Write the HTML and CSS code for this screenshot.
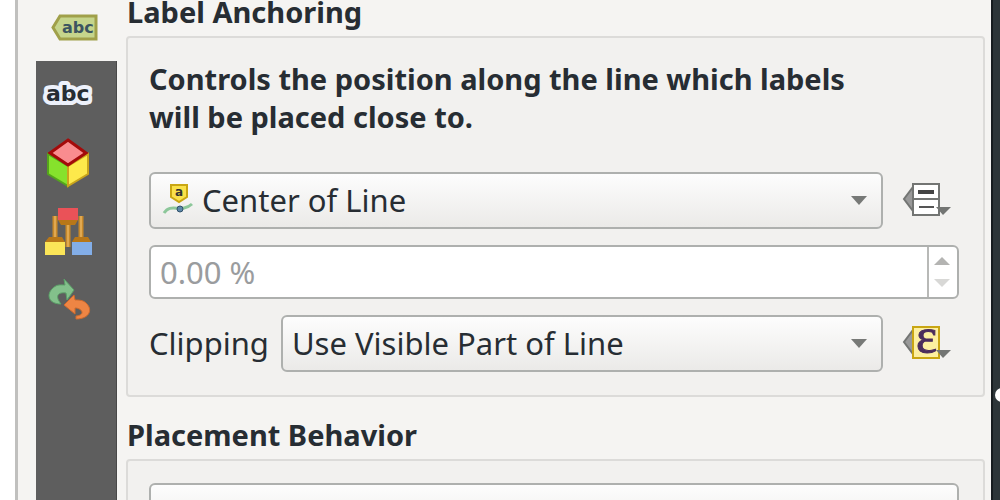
FILE: index.html
```html
<!DOCTYPE html>
<html lang="en">
    <head>
        <meta charset="utf-8">
        <title>Label Settings</title>
        <link rel="stylesheet" href="styles.css">
    </head>
    <body>
        <div class="window">

            <!-- Tabs -->
            <nav class="tabs">
                <button class="tab active" type="button" aria-label="Placement">
                    <svg width="48" height="30" viewBox="0 0 48 30">
                        <path d="M9 4H45V27H9L2 15.500Z" fill="#c5d58c" stroke="#a0a04a" stroke-width="3"/>
                        <text x="11" y="21" class="tag-text">abc</text>
                    </svg>
                </button>
                <button class="tab" type="button" aria-label="Buffer">
                    <svg width="52" height="34" viewBox="0 0 52 34">
                        <text x="4" y="23" class="buffer-text">abc</text>
                    </svg>
                </button>
                <button class="tab" type="button" aria-label="3D">
                    <svg width="52" height="54" viewBox="0 0 52 54">
                        <path d="M6 18L26 30V50L6 38Z" fill="#86e22c" stroke="#55a51c" stroke-width="2"/>
                        <path d="M46 18L26 30V50L46 38Z" fill="#fde94b" stroke="#c9a51c" stroke-width="2"/>
                        <path d="M26 4L44 17L26 29L8 17Z" fill="#f98c8f" stroke="#a40a0a" stroke-width="3"/>
                    </svg>
                </button>
                <button class="tab" type="button" aria-label="Rendering">
                    <svg width="52" height="54" viewBox="0 0 52 54">
                        <path d="M13 12V36M39 12V36M26 20V43" stroke="#c98a2a" stroke-width="5" fill="none"/>
                        <path d="M13 12V36M39 12V36M26 20V43" stroke="#e0a850" stroke-width="2" fill="none"/>
                        <path d="M16 16H36L33 21H19ZM3 38L7 33H20L23 38ZM30 38L33 33H46L49 38Z" fill="#b87718"/>
                        <path d="M16 4H36V16H16Z" fill="#ea5258"/>
                        <path d="M3 38H23V51H3Z" fill="#fbe558"/>
                        <path d="M30 38H50V51H30Z" fill="#83aee8"/>
                    </svg>
                </button>
                <button class="tab" type="button" aria-label="Data defined">
                    <svg width="52" height="54" viewBox="0 0 52 54">
                        <path d="M19 32C6 32 4 22 11 16C15 12 19 13 23 13L22 7L32 18L25 28L24 21C17 20 12 23 19 32Z" fill="#83c08b" stroke="#5ba168" stroke-width="1"/>
                        <path d="M34 47C48 47 51 37 44 31C41 28 37 28 33 28L32 23L22 33L33 42V36C40 36 44 43 34 44Z" fill="#ee8544" stroke="#cf6a2c" stroke-width="1"/>
                    </svg>
                </button>
            </nav>

            <!-- Settings -->
            <main class="panel">
                <section>
                    <h2 class="title">Label Anchoring</h2>
                    <div class="group">
                        <p class="description">Controls the position along the line which labels will be placed close to.</p>
                        <div class="row">
                            <div class="combo with-icon">
                                <select aria-label="Anchor position">
                                    <option>Center of Line</option>
                                </select>
                                <svg class="item-icon" width="32" height="34" viewBox="0 0 32 34">
                                    <path d="M1 31C8 20 18 32 29 22" fill="none" stroke="#8cc79a" stroke-width="3"/>
                                    <path d="M8 3H24V15L16 20L8 15Z" fill="#fae14a" stroke="#c9a613" stroke-width="2"/>
                                    <text x="12" y="14" class="pin-text">a</text>
                                    <circle cx="17" cy="27" r="3" fill="#5b87a8" stroke="#30506a"/>
                                </svg>
                                <svg class="arrow" width="16" height="9" viewBox="0 0 16 9"><path d="M0 0H16L8 9Z"/></svg>
                            </div>
                            <button class="override" type="button" aria-label="Anchor override">
                                <svg width="50" height="38" viewBox="0 0 50 38">
                                    <path d="M12 5V29L3 17Z" fill="#999" stroke="#737573" stroke-width="2"/>
                                    <path d="M12 2H38V33H12ZM12 17H38" fill="#fff" stroke="#737573" stroke-width="2"/>
                                    <path d="M17 10H33" stroke="#444" stroke-width="4"/>
                                    <path d="M18 25H33" stroke="#555" stroke-width="2"/>
                                    <path d="M35 25H50L42 33Z" fill="#737573"/>
                                </svg>
                            </button>
                        </div>
                        <div class="spin">
                            <input type="text" value="0.00 %" aria-label="Position" disabled>
                            <div class="steps">
                                <button type="button" aria-label="Increase" disabled>
                                    <svg width="16" height="8" viewBox="0 0 16 8"><path d="M0 8H16L8 0Z" fill="#b4b4b2"/></svg>
                                </button>
                                <button type="button" aria-label="Decrease" disabled>
                                    <svg width="16" height="8" viewBox="0 0 16 8"><path d="M0 0H16L8 8Z" fill="#d8d8d6"/></svg>
                                </button>
                            </div>
                        </div>
                        <div class="row">
                            <label for="clipping">Clipping</label>
                            <div class="combo">
                                <select id="clipping">
                                    <option>Use Visible Part of Line</option>
                                </select>
                                <svg class="arrow" width="16" height="9" viewBox="0 0 16 9"><path d="M0 0H16L8 9Z"/></svg>
                            </div>
                            <button class="override" type="button" aria-label="Clipping override">
                                <svg width="50" height="38" viewBox="0 0 50 38">
                                    <path d="M12 5V29L3 17Z" fill="#999" stroke="#737573" stroke-width="2"/>
                                    <path d="M12 2H38V33H12Z" fill="#fdf0a0" stroke="#c9a613" stroke-width="2"/>
                                    <text x="15" y="28" class="epsilon">ε</text>
                                    <path d="M35 25H50L42 33Z" fill="#737573"/>
                                </svg>
                            </button>
                        </div>
                    </div>
                </section>
                <section>
                    <h2 class="title">Placement Behavior</h2>
                    <div class="group">
                        <div class="combo">
                            <select aria-label="Side">
                                <option>Right</option>
                            </select>
                        </div>
                    </div>
                </section>
            </main>
        </div>
        <aside class="desktop"><span class="handle"></span></aside>
    </body>
</html>
```
FILE: styles.css
```css
* {
    box-sizing: border-box;
}

body {
    display: flex;
    height: 100vh;
    margin: 0;
    padding-left: 15px;
    overflow: hidden;
    background-color: #fff;
    color: #272d33;
    font-family: "Noto Sans", sans-serif;
    font-size: 31px;
}

button {
    padding: 0;
    border: 0;
    background: none;
}

svg {
    display: block;
    overflow: visible;
}

.window {
    display: flex;
    flex: 1;
    min-width: 0;
    gap: 9px;
    padding-left: 18px;
    padding-right: 6px;
    overflow: hidden;
    border-left: 3px solid #c0c0be;
    background-color: #f5f4f2;
}

/* Tabs */
.tabs {
    display: flex;
    flex-direction: column;
    align-items: stretch;
    width: 81px;
    background-color: #5e5e5e;
    border-right: 1px solid #484848;
}

.tab {
    height: 68px;
    padding-left: 6px;
}

.tab.active {
    height: 61px;
    margin-right: -1px;
    padding: 12px 0 20px 15px;
    background-color: #f5f4f2;
}

.tag-text {
    font: bold 16px "DejaVu Sans", sans-serif;
    fill: #3c5560;
}

.buffer-text {
    font: bold 22px "DejaVu Sans", sans-serif;
    fill: #272d33;
    stroke: #edf1fb;
    stroke-width: 8px;
    stroke-linejoin: round;
    paint-order: stroke;
}

/* Settings */
.panel {
    flex: 1;
    min-width: 0;
}

.title {
    height: 36px;
    margin: 0;
    padding-left: 1px;
    font-size: 29px;
    line-height: 24px;
}

.group {
    display: flex;
    flex-direction: column;
    gap: 16px;
    margin-bottom: 26px;
    padding: 22px 24px 23px 21px;
    border: 2px solid #dcdbd9;
    border-radius: 4px;
    background-color: #f2f1ef;
}

.description {
    margin: 0 0 20px;
    padding-right: 76px;
    font-size: 29px;
    font-weight: bold;
    line-height: 38px;
}

.row {
    display: flex;
    align-items: center;
    gap: 12px;
}

.row label {
    padding-bottom: 2px;
}

.combo {
    position: relative;
    flex: 1;
}

.combo select {
    display: block;
    width: 100%;
    height: 57px;
    padding: 0 40px 2px 9px;
    border: 2px solid #aeb0ae;
    border-radius: 6px;
    background: linear-gradient(#fdfdfd, #ebeae8);
    color: inherit;
    font: inherit;
    appearance: none;
}

.combo.with-icon select {
    padding-left: 51px;
}

.item-icon {
    position: absolute;
    top: 10px;
    left: 14px;
}

.arrow {
    position: absolute;
    top: 24px;
    right: 16px;
    fill: #777977;
    pointer-events: none;
}

.pin-text {
    font: bold 12px "DejaVu Sans", sans-serif;
    fill: #333;
}

.override {
    margin-left: 6px;
    padding-right: 8px;
}

.epsilon {
    font: 50px "Liberation Serif", serif;
    fill: #4b2d5c;
    stroke: #4b2d5c;
}

.spin {
    display: flex;
    height: 54px;
    border: 2px solid #aeb0ae;
    border-radius: 6px;
    background-color: #fff;
}

.spin input {
    flex: 1;
    min-width: 0;
    padding: 0 9px;
    border: 0;
    background: none;
    color: #9a9c9e;
    font: inherit;
}

.steps {
    display: flex;
    flex-direction: column;
    justify-content: center;
    gap: 14px;
    width: 30px;
    padding-left: 5px;
    border-left: 2px solid #b8b9b7;
}

/* Desktop behind the window */
.desktop {
    display: flex;
    align-items: flex-end;
    width: 9px;
    padding-bottom: 98px;
    overflow: hidden;
    border-left: 2px solid #171d20;
    background-color: #2d3639;
}

.handle {
    flex: none;
    width: 14px;
    height: 14px;
    margin-left: 2px;
    border-radius: 50%;
    background-color: #fff;
}
```
